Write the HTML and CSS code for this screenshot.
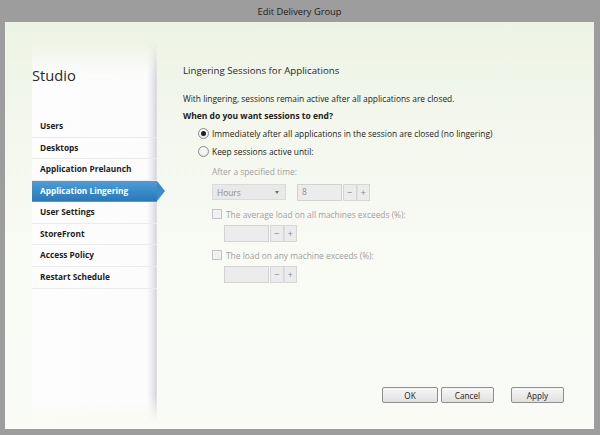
FILE: index.html
```
<!DOCTYPE html>
<html>
<head>
<meta charset="utf-8">
<link rel="stylesheet" href="styles.css">
</head>
<body>
<div class="window">
  <div class="titlebar">Edit Delivery Group</div>
  <div class="client">
    <div class="sidebar">
      <div class="brand">Studio</div>
      <ul class="nav">
        <li class="nav-item">Users</li>
        <li class="nav-item">Desktops</li>
        <li class="nav-item">Application Prelaunch</li>
        <li class="nav-item active">Application Lingering</li>
        <li class="nav-item">User Settings</li>
        <li class="nav-item">StoreFront</li>
        <li class="nav-item">Access Policy</li>
        <li class="nav-item">Restart Schedule</li>
      </ul>
    </div>
    <div class="main">
      <div class="heading">Lingering Sessions for Applications</div>
      <div class="intro">With lingering, sessions remain active after all applications are closed.</div>
      <div class="question">When do you want sessions to end?</div>
      <div class="options">
        <div class="radio-row"><span class="radio checked"><span class="dot"></span></span><span>Immediately after all applications in the session are closed (no lingering)</span></div>
        <div class="radio-row"><span class="radio"></span><span>Keep sessions active until:</span></div>
        <div class="sub">
          <div class="label muted">After a specified time:</div>
          <div class="field-row time-row">
            <div class="select"><span>Hours</span><span class="caret"></span></div>
            <div class="spin">
              <div class="input num">8</div>
              <div class="step">−</div><div class="step">+</div>
            </div>
          </div>
          <div class="check-row"><span class="check"></span><span>The average load on all machines exceeds (%):</span></div>
          <div class="field-row indent">
            <div class="spin">
              <div class="input wide"></div>
              <div class="step">−</div><div class="step">+</div>
            </div>
          </div>
          <div class="check-row"><span class="check"></span><span>The load on any machine exceeds (%):</span></div>
          <div class="field-row indent">
            <div class="spin">
              <div class="input wide"></div>
              <div class="step">−</div><div class="step">+</div>
            </div>
          </div>
        </div>
      </div>
      <div class="buttons">
        <button class="btn ok">OK</button>
        <button class="btn cancel">Cancel</button>
        <button class="btn apply">Apply</button>
      </div>
    </div>
  </div>
</div>
</body>
</html>
```

FILE: styles.css
```
* { box-sizing: border-box; }
html, body { margin: 0; padding: 0; }
body {
  font-family: "Open Sans", "Noto Sans", sans-serif;
  background: #9c9c9c;
}
.window {
  width: 600px;
  height: 435px;
  background: #9d9d9d;
  padding: 0 6px 6px 5px;
  display: flex;
  flex-direction: column;
}
.titlebar {
  height: 22px;
  display: flex;
  align-items: center;
  justify-content: center;
  font-size: 9.3px;
  color: #1c1c1c;
}
.client {
  flex: 1;
  display: flex;
  background: linear-gradient(180deg, #edf3e4 0%, #f3f7ed 25%, #f9fbf5 60%, #fafbf7 100%);
}
.sidebar {
  position: relative;
  width: 125px;
  margin: 20px 0 8px 27px;
  padding-top: 23px;
}
.sidebar::before {
  content: "";
  position: absolute;
  inset: 0;
  background: linear-gradient(to right, #fdfdfd 0, #fcfcfd 115px, #ececf0 120px, #d6d6de 124px, #e4e4e8 125px);
  -webkit-mask-image: linear-gradient(to bottom, transparent 0, #000 35px, #000 calc(100% - 25px), transparent 100%);
  mask-image: linear-gradient(to bottom, transparent 0, #000 35px, #000 calc(100% - 25px), transparent 100%);
}
.brand {
  position: relative;
  font-size: 14.7px;
  line-height: 20px;
  color: #2a2a2a;
  height: 51px;
}
.nav {
  position: relative;
  list-style: none;
  margin: 0;
  padding: 0;
}
.nav-item {
  position: relative;
  height: 21.57px;
  line-height: 20.57px;
  border-bottom: 1px solid #ebebeb;
  padding-left: 8px;
  font-size: 8.3px;
  font-weight: 700;
  color: #1e1e1e;
}
.nav-item.active {
  background: linear-gradient(to bottom, #4c9ed8 0%, #3a8bca 50%, #2b78b8 100%);
  color: #fff;
  border-bottom-color: transparent;
}
.nav-item.active::after {
  content: "";
  position: absolute;
  left: 100%;
  top: 0;
  border-top: 10.8px solid transparent;
  border-bottom: 10.8px solid transparent;
  border-left: 8px solid #3a8bca;
}
.main {
  flex: 1;
  display: flex;
  flex-direction: column;
  padding: 42px 30px 26px 26px;
  font-size: 8.4px;
  color: #222;
}
.heading {
  font-size: 9.7px;
  line-height: 14px;
  color: #2a2a2a;
}
.intro {
  line-height: 14px;
  margin-top: 14px;
}
.question {
  font-size: 8.5px;
  line-height: 14px;
  margin-top: 3px;
  font-weight: 700;
}
.options {
  margin-top: 1px;
  padding-left: 15px;
}
.radio-row {
  height: 18px;
  display: flex;
  align-items: center;
  gap: 3px;
}
.radio {
  width: 11px;
  height: 11px;
  border-radius: 50%;
  border: 1px solid #8d8d8d;
  background: radial-gradient(circle at 50% 40%, #ffffff 0, #f2f2f2 50%, #dcdcdc 100%);
  display: flex;
  align-items: center;
  justify-content: center;
  flex: none;
}
.dot {
  width: 5px;
  height: 5px;
  border-radius: 50%;
  background: #1f1f1f;
}
.sub {
  padding-left: 14px;
  color: #a0a0a0;
}
.label {
  line-height: 14px;
  margin-top: 4.5px;
}
.field-row {
  display: flex;
  gap: 11px;
  align-items: center;
}
.time-row { margin-top: 5px; }
.indent { padding-left: 12px; margin-top: 3.5px; }
.select {
  width: 74px;
  height: 16px;
  background: #e9e9e9;
  border: 1px solid #dadada;
  display: flex;
  align-items: center;
  justify-content: space-between;
  padding: 0 6px 0 4px;
  color: #8c8c8c;
}
.caret {
  width: 0;
  height: 0;
  border-left: 2.5px solid transparent;
  border-right: 2.5px solid transparent;
  border-top: 3px solid #6d6d6d;
}
.spin {
  display: flex;
  height: 17px;
}
.input {
  height: 17px;
  background: #ececec;
  border: 1px solid #d2d2d2;
  color: #8c8c8c;
  padding-left: 4px;
  line-height: 13px;
}
.num { width: 45px; }
.wide { width: 45px; }
.step {
  width: 13.5px;
  height: 17px;
  background: #ececec;
  border: 1px solid #d6d6d6;
  margin-left: 1px;
  display: flex;
  align-items: center;
  justify-content: center;
  color: #8a8a8a;
  font-size: 9.5px;
}
.step + .step { margin-left: 0; border-left: 1px solid #dedede; }
.check-row {
  height: 14px;
  display: flex;
  align-items: center;
  gap: 4px;
  margin-top: 6.5px;
}
.check {
  width: 10px;
  height: 10px;
  border: 1px solid #c4c4c4;
  background: #f1f1f1;
  flex: none;
}
.buttons {
  margin-top: auto;
  display: flex;
  justify-content: flex-end;
  align-items: center;
}
.btn {
  font-family: inherit;
  font-size: 8.2px;
  color: #1a1a1a;
  height: 16px;
  padding: 0;
  border: 1px solid #8e8e8e;
  border-radius: 2px;
  background: linear-gradient(to bottom, #f7f7f7 0%, #ececec 50%, #e0e0e0 100%);
}
.ok { width: 56px; }
.cancel { width: 53px; margin-left: 3px; }
.apply { width: 53px; margin-left: 17px; }
```
